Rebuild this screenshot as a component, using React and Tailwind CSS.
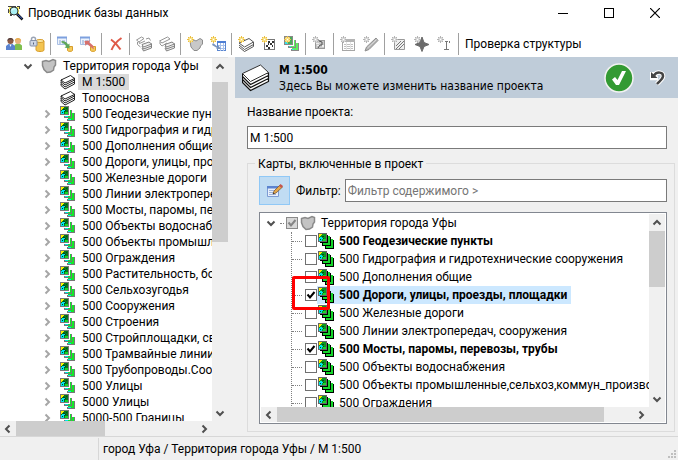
import React, { useState } from "react";
import clsx from "clsx";

const treeItems = [
    "500 Геодезические пункты",
    "500 Гидрография и гидротехнические сооружения",
    "500 Дополнения общие",
    "500 Дороги, улицы, проезды, площадки",
    "500 Железные дороги",
    "500 Линии электропередач, сооружения",
    "500 Мосты, паромы, перевозы, трубы",
    "500 Объекты водоснабжения",
    "500 Объекты промышленные,сельхоз,коммун_производства",
    "500 Ограждения",
    "500 Растительность, болота",
    "500 Сельхозугодья",
    "500 Сооружения",
    "500 Строения",
    "500 Стройплощадки, свалки",
    "500 Трамвайные линии",
    "500 Трубопроводы.Сооружения",
    "500 Улицы",
    "5000 Улицы",
    "5000-500 Границы",
];

const initialChecked = [3, 6];
const boldItems = [0, 3, 6];

/* ---------- icons ---------- */

const Icon = ({ children, className = "size-4", box = "0 0 16 16", crisp = true }) => (
    <svg
        className={clsx("shrink-0", className)}
        viewBox={box}
        fill="none"
        shapeRendering={crisp ? "crispEdges" : "auto"}
        aria-hidden="true"
    >
        {children}
    </svg>
);

const Chevron = ({ dir, color = "#505050" }) => {
    const paths = {
        up: "M1.5 6.5 5 3l3.5 3.5",
        down: "M1.5 3.5 5 7l3.5-3.5",
        left: "M6.5 1.5 3 5l3.5 3.5",
        right: "M3.5 1.5 7 5 3.5 8.5",
    };
    return (
        <Icon className="size-[10px]" box="0 0 10 10" crisp={false}>
            <path d={paths[dir]} stroke={color} strokeWidth="2" />
        </Icon>
    );
};

const Star = ({ gray }) => (
    <>
        <rect x="1" y="1" width="5" height="5" fill={gray ? "#d8d8d8" : "#fbe38a"} />
        <path
            d="M3 0h1v2H3zM3 5h1v2H3zM0 3h2v1H0zM5 3h2v1H5zM1 1h1v1H1zM5 1h1v1H5zM1 5h1v1H1zM5 5h1v1H5z"
            fill={gray ? "#b4b4b4" : "#e9bd45"}
        />
        <rect x="3" y="3" width="1" height="1" fill="#fff" />
    </>
);

const Territory = ({ className }) => (
    <Icon className={className} crisp={false}>
        <path
            d="M1.500 3.500 5 2.500l3 1L12 1.500l2.500 1v4.500l-1.500 2-.5 3-3 2-3.500.5-3-3L1.500 7.500z"
            fill="#c3c3c3"
            stroke="#8a8a8a"
            strokeWidth="1.500"
        />
    </Icon>
);

const Sheets = ({ className }) => (
    <Icon className={className} crisp={false}>
        <path d="M1 11.500 5 15l9.500-5V8L1 10z" fill="#fff" stroke="#222" />
        <path d="M1 9.500 5 13l9.500-5V6L1 8z" fill="#fff" stroke="#222" />
        <path d="M1 7.500 5 11l9.500-5V4L1 6z" fill="#fff" stroke="#222" />
        <path d="M1 6 10.500 1.500l4 3L5 9z" fill="#fff" stroke="#222" />
    </Icon>
);

const BigSheets = () => (
    <Icon className="size-7" box="0 0 28 28" crisp={false}>
        <path d="M.500 18.500 8.500 26.500l18-9V15L.500 16z" fill="#fff" stroke="#111" strokeWidth="1.200" />
        <path d="M.500 15.500 8.500 23.500l18-9V12L.500 13z" fill="#fff" stroke="#111" strokeWidth="1.200" />
        <path d="M.500 12.500 8.500 20.500l18-9V9L.500 10z" fill="#fff" stroke="#111" strokeWidth="1.200" />
        <path d="M.500 9.500 18.500 1l8 7.500-18 9z" fill="#fff" stroke="#333" />
    </Icon>
);

const LayerMap = () => (
    <Icon>
        {/* back sheet */}
        <path d="M14 7h1v8H7v-2h1v1h6z" fill="#777" />
        <path d="M12 7h2v7H8v-2h4z" fill="#14e82a" />
        <path d="M8 13h3v1H8z" fill="#00e5ee" />
        {/* middle sheet */}
        <path d="M11 4h1v8H4v-2h1v1h6z" fill="#777" />
        <path d="M9 4h2v7H5V9h4z" fill="#14e82a" />
        <path d="M5 10h3v1H5z" fill="#00e5ee" />
        <path d="M9 4h1v6H5V9h4z" fill="#fff" />
        {/* front sheet */}
        <path d="M0 0h9v9H0z" fill="#777" />
        <path d="M1 1h7v7H1z" fill="#087a18" />
        <path d="M1 1h3v1H3v1H2v1H1z" fill="#fff000" />
        <path d="M1 5h1V4h1V3h2v1h1v1H5v1H4v2H1z" fill="#00e5ee" />
        <path d="M3 3h2v1H3zM5 4h1v1H5zM4 5h1v1H4zM6 2h1v1H6zM2 6h1v1H2z" fill="#042" />
        <path d="M5 6h3v2H5z" fill="#12d828" />
    </Icon>
);

const StackMap = () => (
    <Icon>
        <path d="M8 7h8v9H7v-3h1z" fill="#000" />
        <path d="M13 6h2v9H8v-2h5z" fill="#16d62c" />
        <path d="M5 4h8v9H4v-3h1z" fill="#000" />
        <path d="M10 3h2v9H5v-2h5z" fill="#16d62c" />
        <path d="M2 2h8v8H2z" fill="#000" />
        <path d="M0 0h9v9H0z" fill="#666" />
        <path d="M1 1h7v7H1z" fill="#0a991e" />
        <path d="M1 1h3v1H3v1H2v1H1z" fill="#fff000" />
        <path d="M1 5h1V4h2v1h1v1H4v2H1z" fill="#00e5ee" />
        <path d="M4 3h2v1H4zM5 5h1v1H5zM2 6h1v1H2z" fill="#042" />
        <path d="M5 6h3v2H5z" fill="#16d62c" />
    </Icon>
);

const AppIcon = () => (
    <Icon>
        <path d="M0 1h8v1H0zM9 1h3v3h-2zM0 4h2v4H0zM2 9h2v2H2z" fill="#444" />
        <path d="M1 2h10v7H1z" fill="#fff26a" />
        <g shapeRendering="auto">
            <circle cx="6" cy="6" r="4" fill="#a9f0f4" stroke="#333" />
            <path d="M4 5.500c.5-1.500 2-2 3-1.500" stroke="#fff" />
            <path d="m9 9 5.500 5.500" stroke="#111" strokeWidth="2.500" />
            <path d="m9.500 9.500 4.500 4" stroke="#3b64d8" />
        </g>
    </Icon>
);

const icons = {
    users: (
        <Icon crisp={false}>
            <path d="M8.500 14V9l2-1.500h3L16 9.500V14z" fill="#7fbf4f" />
            <circle cx="12" cy="5" r="3" fill="#eab27a" />
            <path d="M8.800 5c0-3.500 6-4 6.400 0l-1.700-1.500h-3z" fill="#e3a93c" />
            <path d="M0 14v-4l2.500-2h4L9 10v4z" fill="#5a83d0" />
            <circle cx="4.500" cy="5" r="3" fill="#8f5b45" />
            <path d="M1.300 5c0-4 6-4 6.400 0L6 3.500H3z" fill="#4b3a3a" />
            <path d="M3.500 8.500 4.500 11l1-2.500z" fill="#fff" />
        </Icon>
    ),
    lockDb: (
        <Icon crisp={false}>
            <path d="M7 5v9c0 2 8 2 8 0V5z" fill="#f3c450" stroke="#d79d2c" />
            <ellipse cx="11" cy="5" rx="4" ry="1.500" fill="#fce9a5" stroke="#d79d2c" />
            <path d="M2.500 5V3c0-2.500 4-2.500 4 0v2" stroke="#9aa4b5" strokeWidth="1.500" />
            <rect x="1" y="4.500" width="7" height="5.500" rx="1" fill="#cdd6e5" stroke="#8490a8" />
            <path d="M4.500 6.500v2" stroke="#56617a" />
        </Icon>
    ),
    importDb: (
        <Icon crisp={false}>
            <path d="M.5 1.500h9v7h-9z" fill="#eef4fd" stroke="#a9bfe4" />
            <path d="M0 1.500h10" stroke="#7da0de" strokeWidth="2" />
            <path d="M2 5h2M5 5h3M2 7h2M5 7h3" stroke="#88a4d0" />
            <path d="M10.500 10.500v4c0 1.200 5 1.200 5 0v-4z" fill="#f5cb5c" stroke="#d79d2c" />
            <path d="M4.500 5C8 5 10 6.500 11 8.500l1.500-1v5l-5-1 1.500-1.200C8 8 6.500 7 4.500 6.500z" fill="#5da65b" />
        </Icon>
    ),
    exportDb: (
        <Icon crisp={false}>
            <path d="M.5 1.500h9v7h-9z" fill="#eef4fd" stroke="#a9bfe4" />
            <path d="M0 1.500h10" stroke="#7da0de" strokeWidth="2" />
            <path d="M2 5h2M5 5h3M2 7h2" stroke="#88a4d0" />
            <path d="M10.500 10.500v4c0 1.200 5 1.200 5 0v-4z" fill="#f5cb5c" stroke="#d79d2c" />
            <path d="m4.500 5 6-.5-1.500 1.500 4 3.500 1 4-2-1.500-5-4L5.500 10z" fill="#d8716d" />
        </Icon>
    ),
    remove: (
        <Icon crisp={false}>
            <path d="M3 3.500c3 2 7 6 9.500 10M13.500 2C9 5 5.500 9 3.500 14" stroke="#df5a48" strokeWidth="2" />
        </Icon>
    ),
    copySheets: (
        <Icon crisp={false}>
            <path d="m.5 4 5-3L8 2.500 3 6zM3 6l.5 1.500L9 5" fill="#fff" stroke="#959595" />
            <path d="M1.500 6v2.500l3 2.500M10 3l3-1 1.500 2.500" stroke="#959595" />
            <path d="m6 12 1.500 3 8-3V9M6 10l1.500 3 8-3V7.500M6 8.500l7-2.500 2.500 2-8 3z" fill="#eee" stroke="#828282" />
        </Icon>
    ),
    pasteSheets: (
        <Icon crisp={false}>
            <path d="m.5 5 8-4 2.500 2L3 7zM1 6v2l2 2 5-3" fill="#fff" stroke="#959595" />
            <path d="m6 12 1.500 3 8-3V9M6 10l1.500 3 8-3V7.500M6 8.500l7-2.500 2.500 2-8 3z" fill="#eee" stroke="#828282" />
        </Icon>
    ),
    newTerritory: (
        <Icon>
            <path
                d="m3 5 4-1 2 1 4-2.500L15.500 4v4l-2 2-.5 2-3 2.500H7L4 11z"
                fill="#c8c8c8"
                stroke="#8c8c8c"
                shapeRendering="auto"
            />
            <Star />
        </Icon>
    ),
    newTable: (
        <Icon>
            <path d="M7.500 5.500h8v9h-8z" fill="#fff" stroke="#5b86d0" />
            <path d="M7 5h9v2H7z" fill="#4f7fd4" />
            <path d="M8 9.500h7M8 12.500h7M10.500 7v8M13.500 7v8" stroke="#a9c2ec" />
            <path d="m3 7 5 4V9l3 4H6l1-1-5-3z" fill="#7b95bd" shapeRendering="auto" />
            <Star />
        </Icon>
    ),
    newProject: (
        <Icon>
            <g shapeRendering="auto" stroke="#555" fill="#fff">
                <path d="m1 11 5.500 4.500 9-5V8M1 9l5.500 4.500 9-5V6" />
                <path d="m1 7 10-4.500L15.500 6l-9 5z" />
            </g>
            <Star />
        </Icon>
    ),
    newRaster: (
        <Icon>
            <path d="M3.500 3.500h10v10h-10z" fill="#fff" stroke="#777" />
            <path d="M7 5h2v2H7zM11 5h2v2h-2zM9 7h2v2H9zM5 9h2v2H5zM7 7h1v2H7zM11 9h1v2h-1zM7 11h2v2H7z" fill="#333" />
            <Star />
        </Icon>
    ),
    newLayers: (
        <Icon>
            <path d="M14 7h1v8H7v-2h1v1h6z" fill="#888" />
            <path d="M12 7h2v7H8v-2h4z" fill="#5cf05c" />
            <path d="M11 4h1v8H4v-2h1v1h6z" fill="#888" />
            <path d="M9 4h2v7H5V9h4z" fill="#5cf05c" />
            <path d="M9 4h1v6H5V9h4z" fill="#fff" />
            <path d="M5 10h2v1H5zM8 13h2v1H8z" fill="#39dfe6" />
            <path d="M0 0h9v9H0z" fill="#888" />
            <path d="M1 1h7v7H1z" fill="#4aac58" />
            <path d="M1 6h3v2H1z" fill="#39dfe6" />
            <Star />
        </Icon>
    ),
    newTheme: (
        <Icon>
            <path d="M3 4h10v9H3z" fill="#999" />
            <path d="M4 5h8v7H4z" fill="#c8c8c8" />
            <path d="m7 5 3 1v3H8l-2 3" stroke="#555" shapeRendering="auto" />
            <path d="M4 7h3v1H4zM5 9h2v1H5zM10 9h2v2h-2z" fill="#eee" />
            <Star gray />
        </Icon>
    ),
    newSheet: (
        <Icon>
            <path d="M2.500 3.500h12v11h-12z" fill="#fff" stroke="#a6a6a6" />
            <path d="M2 3h13v3H2z" fill="#b4b4b4" />
            <path d="M4 8.500h9M4 10.500h9M4 12.500h9" stroke="#c0c0c0" />
            <path d="M6.500 6v8M10.500 6v8" stroke="#e4e4e4" />
            <Star gray />
        </Icon>
    ),
    newStyle: (
        <Icon crisp={false}>
            <path d="m2 15 1.500-4 9.500-9 2 2.500-9 9z" fill="#b4b4b4" stroke="#8f8f8f" />
            <path d="m4.500 12 9-8.500" stroke="#ddd" />
            <Star gray />
        </Icon>
    ),
    newHatch: (
        <Icon crisp={false}>
            <path d="M3.500 3.500h10v10h-10z" fill="#eee" stroke="#999" />
            <path d="m5 10 5-5M5 13l8-8M8 13l5-5" stroke="#777" />
            <Star gray />
        </Icon>
    ),
    newSymbol: (
        <Icon crisp={false}>
            <path d="m8 1 2 5.500 5 2-5 2L8 15.500l-2-5-5-2 5-2z" fill="#6b6b6b" stroke="#6b6b6b" />
            <Star gray />
        </Icon>
    ),
    newText: (
        <Icon>
            <path d="M8 5.500h3M9.500 5v8M7 13.500h5M12.500 7V5" stroke="#777" />
            <Star gray />
        </Icon>
    ),
};

const toolbarGroups = [
    [["users", "Пользователи"], ["lockDb", "Блокировка базы"]],
    [["importDb", "Импорт"], ["exportDb", "Экспорт"]],
    [["remove", "Удалить"]],
    [["copySheets", "Копировать"], ["pasteSheets", "Вставить"]],
    [["newTerritory", "Новая территория"], ["newTable", "Новая таблица"]],
    [["newProject", "Новый проект"], ["newRaster", "Новый растр"], ["newLayers", "Новая карта"]],
    [["newTheme", "Новая тема"]],
    [["newSheet", "Новый лист"], ["newStyle", "Новый стиль"]],
    [["newHatch", "Новая штриховка"], ["newSymbol", "Новый символ"], ["newText", "Новый текст"]],
];

/* ---------- small parts ---------- */

const VScroll = ({ thumb }) => (
    <div className="flex w-4 shrink-0 flex-col bg-[#f0f0f0]">
        <button aria-label="Вверх" className="flex h-[17px] shrink-0 items-center justify-center">
            <Chevron dir="up" />
        </button>
        <div className="min-h-0 flex-1">
            <div className={clsx("bg-[#cdcdcd]", thumb)} />
        </div>
        <button aria-label="Вниз" className="flex h-[17px] shrink-0 items-center justify-center">
            <Chevron dir="down" />
        </button>
    </div>
);

const HScroll = ({ thumb }) => (
    <div className="flex h-[15px] shrink-0 bg-[#f0f0f0] pr-4">
        <button aria-label="Влево" className="flex w-4 shrink-0 items-center justify-center">
            <Chevron dir="left" />
        </button>
        <div className="min-w-0 flex-1">
            <div className={clsx("h-full bg-[#cdcdcd]", thumb)} />
        </div>
        <button aria-label="Вправо" className="flex w-[17px] shrink-0 items-center justify-center">
            <Chevron dir="right" />
        </button>
    </div>
);

const CheckBox = ({ id, checked, onChange, label, gray }) => (
    <span className="grid size-3 shrink-0 place-items-center">
        <input
            id={id}
            type="checkbox"
            aria-label={label}
            checked={checked}
            onChange={onChange}
            className={clsx(
                "col-start-1 row-start-1 size-3 appearance-none border",
                gray ? "border-[#8a8a8a] bg-[#d8d8d8]" : "border-[#707070] bg-white"
            )}
        />
        {checked && (
            <Icon className="pointer-events-none col-start-1 row-start-1 size-3" box="0 0 12 12" crisp={false}>
                <path d="M2.500 5.500 5 8.500 9.500 3" stroke={gray ? "#858585" : "#000"} strokeWidth="2" />
            </Icon>
        )}
    </span>
);

const TitleBar = () => (
    <header className="flex h-[30px] shrink-0 items-center pb-1 pl-2">
        <AppIcon />
        <h1 className="flex-1 pl-1">Проводник базы данных</h1>
        <button aria-label="Свернуть" className="flex h-full w-[46px] items-center justify-center">
            <Icon className="size-[10px]" box="0 0 10 10">
                <path d="M0 5h10v1H0z" fill="#000" />
            </Icon>
        </button>
        <button aria-label="Развернуть" className="flex h-full w-[46px] items-center justify-center">
            <Icon className="size-[10px]" box="0 0 10 10">
                <path d="M.5.5h9v9h-9z" stroke="#000" />
            </Icon>
        </button>
        <button aria-label="Закрыть" className="flex h-full w-[46px] items-center justify-center">
            <Icon className="size-[10px]" box="0 0 10 10" crisp={false}>
                <path d="m0 0 10 10M10 0 0 10" stroke="#000" strokeWidth="1.200" />
            </Icon>
        </button>
    </header>
);

const Toolbar = () => (
    <div role="toolbar" className="flex h-[27px] shrink-0 items-center pl-[2px]">
        {toolbarGroups.map((group, i) => (
            <React.Fragment key={i}>
                {group.map(([name, title]) => (
                    <button key={name} title={title} className="flex h-[22px] w-[23px] items-center justify-center">
                        {icons[name]}
                    </button>
                ))}
                <span className="mx-[2px] h-[22px] w-px bg-[#a0a0a0]" />
            </React.Fragment>
        ))}
        <button className="px-1">Проверка структуры</button>
    </div>
);

const ProjectTree = () => (
    <nav className="flex w-2/5 max-w-[228px] shrink-0 flex-col border-t border-[#e3e3e3]">
        <div className="flex min-h-0 flex-1">
            <ul className="min-w-0 flex-1 overflow-hidden bg-white whitespace-nowrap">
                <li className="flex h-4 items-center pl-[23px]">
                    <Chevron dir="down" />
                    <Territory className="ml-2 size-4" />
                    <span className="pl-[6px]">Территория города Уфы</span>
                </li>
                <li className="flex h-4 items-center pl-[60px]">
                    <Sheets className="size-4" />
                    <span className="ml-[2px] h-4 bg-[#d9d9d9] px-1 leading-4">M 1:500</span>
                </li>
                <li className="flex h-4 items-center pl-[60px]">
                    <Sheets className="size-4" />
                    <span className="pl-[6px]">Топооснова</span>
                </li>
                {treeItems.map((item) => (
                    <li key={item} className="flex h-4 items-center pl-[42px]">
                        <Chevron dir="right" color="#a6a6a6" />
                        <span className="flex pl-2">
                            <LayerMap />
                        </span>
                        <span className="pl-[6px]">{item}</span>
                    </li>
                ))}
            </ul>
            <VScroll thumb="mt-[7px] h-40" />
        </div>
        <HScroll thumb="w-[89px]" />
    </nav>
);

const PanelHeader = () => (
    <div className="flex h-[41px] shrink-0 items-center bg-[#bfccd9] pr-3 pl-[7px]">
        <BigSheets />
        <div className="min-w-0 flex-1 pl-[9px] font-['DejaVu_Sans_Condensed','DejaVu_Sans',sans-serif] leading-4">
            <h2 className="font-bold">M 1:500</h2>
            <p>Здесь Вы можете изменить название проекта</p>
        </div>
        <button aria-label="Применить" className="flex">
            <Icon className="size-[30px]" box="0 0 30 30" crisp={false}>
                <circle cx="15" cy="15" r="14" fill="#339a33" stroke="#f2f2f2" strokeWidth="1.500" />
                <path d="M8 16.500 11 14l2.500 3L18 8h4l-7 14h-3z" fill="#fff" />
            </Icon>
        </button>
        <button aria-label="Отменить" className="ml-4 flex">
            <Icon className="size-4" crisp={false}>
                <path d="M4 5.500C7 1 13.500 2 13 6.500c-.3 3-3.500 4.500-6 7.500M2 2v6h6" stroke="#fff" strokeWidth="4.500" />
                <path d="M4 5.500C7 1 13.500 2 13 6.500c-.3 3-3.500 4.500-6 7.500" stroke="#444" strokeWidth="2.500" />
                <path d="M1 2v6h6.500z" fill="#444" />
            </Icon>
        </button>
    </div>
);

const MapList = () => {
    const [checked, setChecked] = useState(initialChecked);
    const [selected, setSelected] = useState(3);

    const toggle = (index) => {
        setSelected(index);
        setChecked((prev) => (prev.includes(index) ? prev.filter((i) => i !== index) : [...prev, index]));
    };

    return (
        <div className="mt-[7px] flex min-h-0 flex-1 flex-col border border-[#828790] bg-white p-px">
            <div className="flex min-h-0 flex-1">
                <div className="min-w-0 flex-1 overflow-hidden whitespace-nowrap">
                    <div className="flex h-[18px] items-center pl-[5px]">
                        <Chevron dir="down" />
                        <span className="ml-1 w-1 border-t border-dotted border-[#808080]" />
                        <span className="pl-[2px]">
                            <CheckBox label="Территория города Уфы" checked gray onChange={() => {}} />
                        </span>
                        <Territory className="ml-[2px] size-4" />
                        <span className="pl-[5px]">Территория города Уфы</span>
                    </div>
                    <ul className="ml-[30px] border-l border-dotted border-[#808080]">
                        {treeItems.map((item, i) => (
                            <li key={item} className="relative flex h-[18px] items-center">
                                <span className="mr-[3px] w-[10px] shrink-0 border-t border-dotted border-[#808080]" />
                                <CheckBox id={`map-${i}`} checked={checked.includes(i)} onChange={() => toggle(i)} />
                                <label
                                    htmlFor={`map-${i}`}
                                    className={clsx(
                                        "flex h-[18px] shrink-0 items-center pr-1 pl-px",
                                        selected === i && "bg-[#cce8ff]",
                                        boldItems.includes(i) && "font-bold"
                                    )}
                                >
                                    <StackMap />
                                    <span className="pl-[5px]">{item}</span>
                                </label>
                                {i === 3 && (
                                    <span className="pointer-events-none absolute -top-[10px] left-0 z-10 h-[34px] w-[38px] rounded-xs border-3 border-[#ff0000]" />
                                )}
                            </li>
                        ))}
                    </ul>
                </div>
                <VScroll thumb="h-14" />
            </div>
            <HScroll thumb="w-[92%]" />
        </div>
    );
};

const ProjectForm = () => {
    const [name, setName] = useState("M 1:500");
    const [filter, setFilter] = useState("");

    return (
        <main className="flex min-w-0 flex-1 flex-col">
            <PanelHeader />
            <form className="flex min-h-0 flex-1 flex-col pr-[3px] pb-1 pl-3" onSubmit={(e) => e.preventDefault()}>
                <label htmlFor="project-name" className="pt-[5px] leading-[18px]">
                    Название проекта:
                </label>
                <input
                    id="project-name"
                    type="text"
                    value={name}
                    onChange={(e) => setName(e.target.value)}
                    className="mt-[5px] mr-2 h-[23px] shrink-0 border border-[#7a7a7a] bg-white px-[2px] outline-none"
                />
                <div
                    role="group"
                    aria-labelledby="maps-title"
                    className="mt-[14px] flex min-h-0 flex-1 flex-col border border-[#dcdcdc] pr-[7px] pb-[7px] pl-[11px]"
                >
                    <h3 id="maps-title" className="-mt-2 -ml-1 self-start bg-[#f0f0f0] px-[3px] leading-4">
                        Карты, включенные в проект
                    </h3>
                    <div className="mt-1 flex shrink-0 items-center">
                        <button
                            type="button"
                            aria-label="Изменить"
                            className="flex h-[29px] w-[31px] shrink-0 items-center justify-center border border-[#90c8f6] bg-[#c0dcf3]"
                        >
                            <Icon crisp={false}>
                                <path d="M.5 3.500h11v10H.5z" fill="#e8effb" stroke="#7d9bd3" />
                                <path d="M0 3h12v2.500H0z" fill="#5b83cf" />
                                <path d="M2 7.500h6M2 9.500h4M2 11.500h7" stroke="#9fb3d8" />
                                <path d="m6 11 1-3 6-6 2.500 2L9 10z" fill="#e5a84a" stroke="#7a5a3a" strokeWidth=".8" />
                                <path d="m12 3 1.500-2L16 3l-1.500 2z" fill="#c6564c" />
                                <path d="m6 11 .5-1.500 1 1z" fill="#222" />
                            </Icon>
                        </button>
                        <label htmlFor="filter" className="pr-1 pl-[6px]">
                            Фильтр:
                        </label>
                        <input
                            id="filter"
                            type="text"
                            value={filter}
                            onChange={(e) => setFilter(e.target.value)}
                            placeholder="Фильтр содержимого >"
                            className="h-[23px] min-w-0 flex-1 border border-[#7a7a7a] bg-white px-[2px] outline-none placeholder:text-[#757575]"
                        />
                    </div>
                    <MapList />
                </div>
            </form>
        </main>
    );
};

const StatusBar = () => (
    <footer className="flex h-6 shrink-0 items-stretch border-t border-[#d7d7d7]">
        <div className="mt-px w-[98px] shrink-0" />
        <div className="mt-px flex flex-1 items-center border-l border-[#d7d7d7] pl-1">
            город Уфа / Территория города Уфы / M 1:500
        </div>
        <Icon className="size-[10px] self-end" box="0 0 10 10">
            <path d="M6 0h2v2H6zM3 3h2v2H3zM6 3h2v2H6zM0 6h2v2H0zM3 6h2v2H3zM6 6h2v2H6z" fill="#bfbfbf" />
        </Icon>
    </footer>
);

export default function App() {
    return (
        <div className="flex h-screen flex-col overflow-hidden bg-white font-[Roboto,'Noto_Sans',sans-serif] text-[12px] leading-4 text-black">
            <TitleBar />
            <Toolbar />
            <div className="flex min-h-0 flex-1 flex-col bg-[#f0f0f0]">
                <div className="flex min-h-0 flex-1 gap-[7px]">
                    <ProjectTree />
                    <ProjectForm />
                </div>
                <StatusBar />
            </div>
        </div>
    );
}
